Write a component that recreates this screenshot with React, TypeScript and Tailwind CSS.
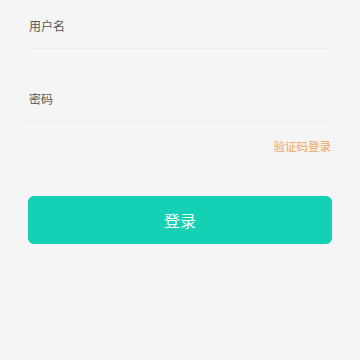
import React from "react";

export default function App() {
  const font = { fontFamily: '"Noto Sans CJK SC", "Noto Sans", sans-serif' };
  return (
    <div className="w-[360px] h-[360px] bg-[#f5f5f5] px-[28px]" style={font}>
      <div className="flex h-[49px] items-center pt-[4px] border-b border-[#e6e9ee] text-[12px] text-[#555555] pl-[1px]">
        用户名
      </div>
      <div className="mt-[24px] flex h-[49px] items-center pt-[4px] border-b border-[#e6e9ee] text-[12px] text-[#555555] pl-[1px]">
        密码
      </div>
      <div className="mt-[14px] h-[20px] leading-[20px] text-right text-[11.5px] text-[#f5a35d] pr-[1px]">
        验证码登录
      </div>
      <button className="mt-[40px] w-full h-[48px] rounded-[6px] bg-[#14d1b6] text-white text-[16px] flex items-center justify-center">
        登录
      </button>
    </div>
  );
}
